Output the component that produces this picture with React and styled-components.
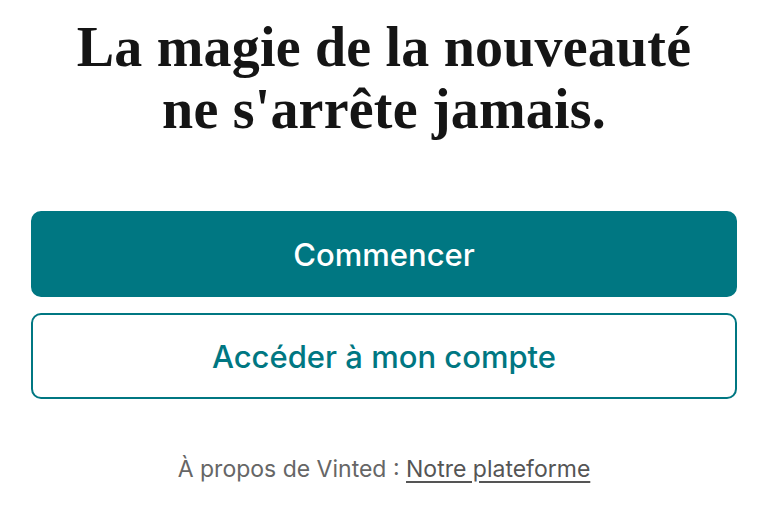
import React from "react";
import styled, { createGlobalStyle } from "styled-components";

const GlobalStyle = createGlobalStyle`
  html, body {
    margin: 0;
    padding: 0;
    background: #fff;
  }
`;

const Page = styled.div`
  width: 768px;
  height: 512px;
  box-sizing: border-box;
  padding: 16px 31px 0 31px;
  display: flex;
  flex-direction: column;
  align-items: stretch;
  overflow: hidden;
`;

const Headline = styled.h1`
  margin: 0;
  text-align: center;
  font-family: "Liberation Serif", "DejaVu Serif", serif;
  font-weight: 700;
  font-size: 56px;
  line-height: 62px;
  letter-spacing: 0.2px;
  color: #151515;
`;

const Actions = styled.div`
  margin-top: 71px;
  display: flex;
  flex-direction: column;
  gap: 16px;
`;

const Button = styled.button`
  height: 86px;
  box-sizing: border-box;
  border-radius: 10px;
  border: 2px solid #007782;
  background: ${(p) => (p.$primary ? "#007782" : "#fff")};
  color: ${(p) => (p.$primary ? "#fff" : "#007782")};
  font-family: Inter, "Noto Sans", sans-serif;
  font-size: 31px;
  font-weight: 500;
  cursor: pointer;
`;

const Footer = styled.p`
  margin: 56px 0 0 0;
  text-align: center;
  font-family: Inter, "Noto Sans", sans-serif;
  font-size: 23px;
  color: #666;
`;

const FooterLink = styled.a`
  color: #555;
  text-decoration: underline;
  text-underline-offset: 4px;
`;

export default function App() {
  return (
    <>
      <GlobalStyle />
      <Page>
        <Headline>
          La magie de la nouveauté
          <br />
          ne s'arrête jamais.
        </Headline>
        <Actions>
          <Button $primary>Commencer</Button>
          <Button>Accéder à mon compte</Button>
        </Actions>
        <Footer>
          À propos de Vinted : <FooterLink href="#">Notre plateforme</FooterLink>
        </Footer>
      </Page>
    </>
  );
}
